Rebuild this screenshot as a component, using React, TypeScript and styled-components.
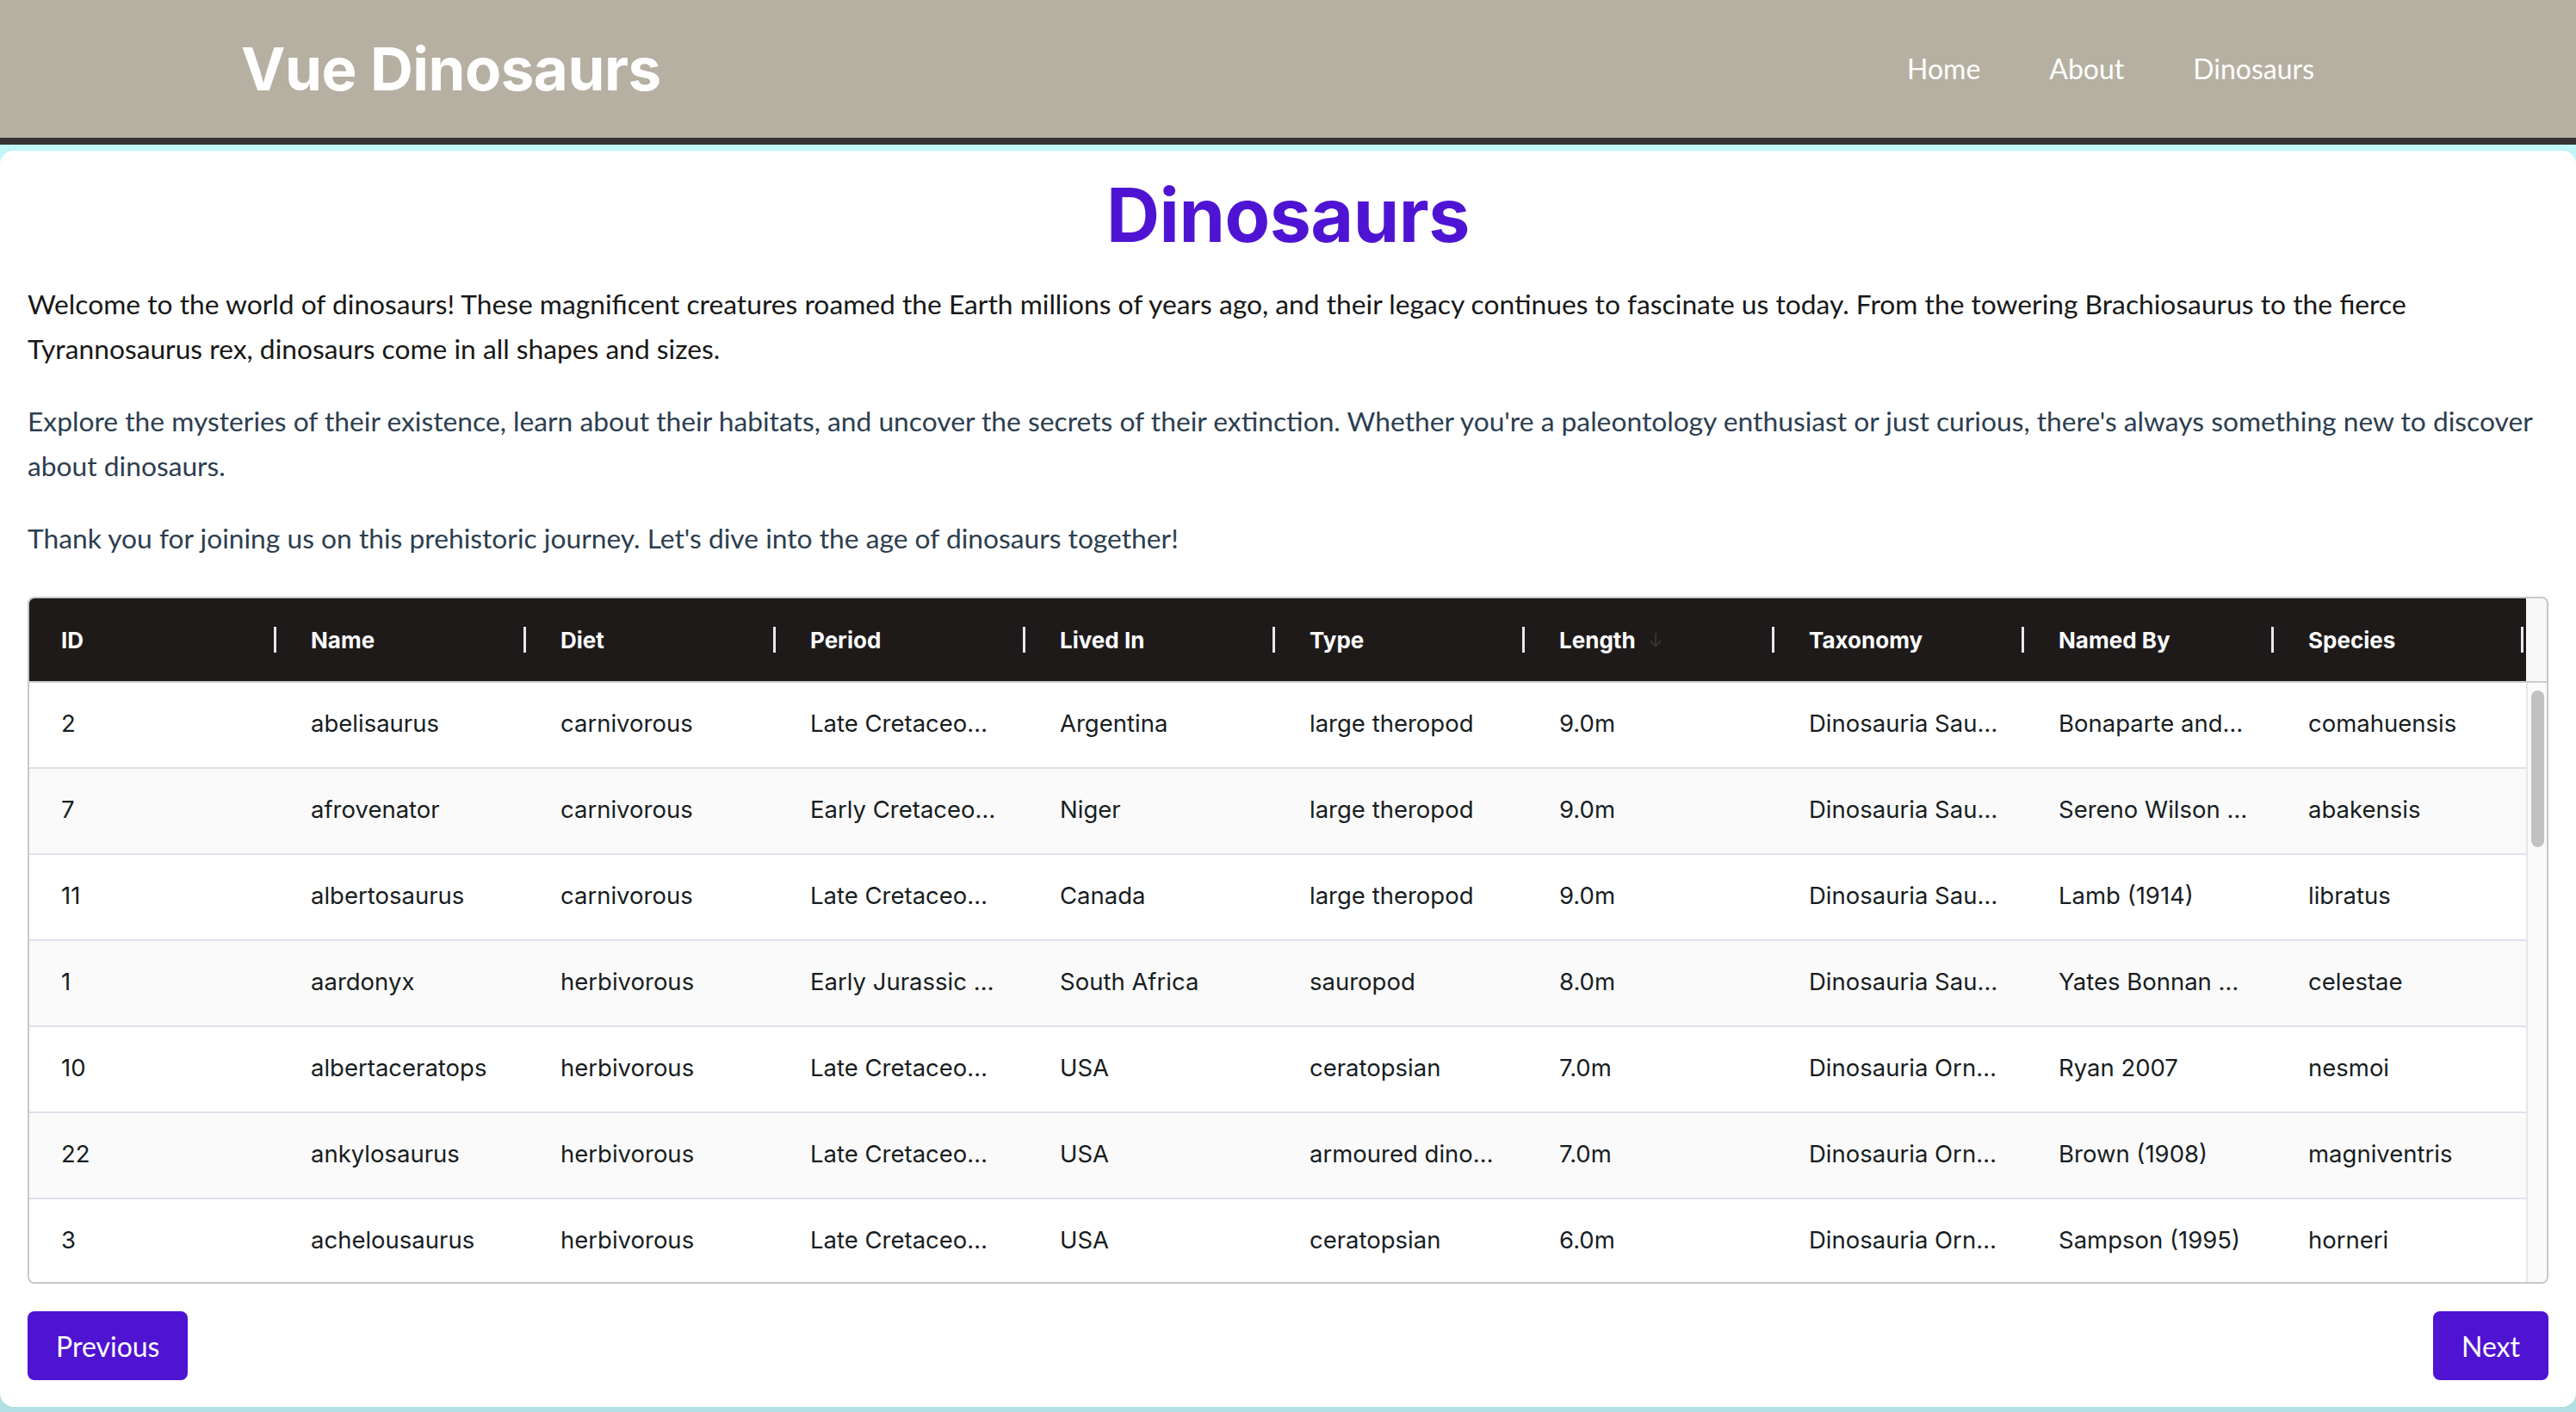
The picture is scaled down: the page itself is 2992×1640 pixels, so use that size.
import React from "react";
import styled, { createGlobalStyle } from "styled-components";

const GlobalStyle = createGlobalStyle`
  html, body {
    margin: 0;
    padding: 0;
  }
  body {
    min-height: 100vh;
    background: linear-gradient(180deg, #c3f9fc 0%, #b2e0e4 100%);
    font-family: "Lato", "Open Sans", sans-serif;
  }
  * { box-sizing: border-box; }
`;

const Header = styled.header`
  height: 168px;
  background: #b6b0a3;
  border-bottom: 8px solid #333333;
  display: flex;
  align-items: center;
  justify-content: space-between;
  padding: 0 304px 0 280px;
`;

const Brand = styled.div`
  font-family: "Inter", "DejaVu Sans", sans-serif;
  font-weight: 700;
  font-size: 69px;
  letter-spacing: -0.5px;
  color: #ffffff;
  line-height: 1;
`;

const Nav = styled.nav`
  display: flex;
  gap: 80px;
`;

const NavLink = styled.a`
  font-family: "Lato", sans-serif;
  font-size: 32px;
  color: #ffffff;
  text-decoration: none;
  line-height: 1;
`;

const Page = styled.main`
  padding: 7px 0;
`;

const Card = styled.section`
  background: #ffffff;
  border-radius: 16px;
  padding: 24px 32px 31px;
  display: flex;
  flex-direction: column;
`;

const Title = styled.h1`
  margin: 0 0 25px;
  text-align: center;
  font-family: "Inter", "DejaVu Sans", sans-serif;
  font-weight: 700;
  font-size: 86px;
  line-height: 103px;
  letter-spacing: -0.5px;
  color: #4f14d3;
`;

const Intro = styled.div`
  display: flex;
  flex-direction: column;
  gap: 32px;
  margin-bottom: 42px;
`;

const Paragraph = styled.p<{ $tone?: "dark" | "slate" }>`
  margin: 0;
  font-family: "Lato", sans-serif;
  font-size: 31.75px;
  line-height: 52px;
  color: ${(p) => (p.$tone === "slate" ? "#2c3e50" : "#181818")};
`;

const Grid = styled.div`
  border: 2px solid #c4c8cc;
  border-radius: 8px;
  overflow: hidden;
  height: 798px;
  display: flex;
  flex-direction: column;
  font-family: "Inter", "Roboto", sans-serif;
`;

const HeaderRow = styled.div`
  display: flex;
  height: 98px;
  flex: none;
  border-bottom: 2px solid #c9ccd1;
`;

const HeaderCells = styled.div`
  display: flex;
  background: #1e1a1a;
`;

const HeaderCell = styled.div`
  position: relative;
  width: 290px;
  flex: none;
  padding: 0 37px;
  display: flex;
  align-items: center;
  gap: 12px;
  font-size: 26px;
  font-weight: 700;
  color: #ffffff;

  &::after {
    content: "";
    position: absolute;
    right: 3px;
    top: 50%;
    width: 3px;
    height: 30px;
    margin-top: -15px;
    background: #e6e8ec;
  }
`;

const SortIcon = styled.svg`
  width: 22px;
  height: 22px;
  flex: none;
`;

const HeaderGutter = styled.div`
  flex: 1;
  background: #f8f8f8;
`;

const Body = styled.div`
  flex: 1;
  display: flex;
  min-height: 0;
`;

const Rows = styled.div`
  display: flex;
  flex-direction: column;
  overflow: hidden;
`;

const Row = styled.div<{ $alt: boolean }>`
  display: flex;
  flex: none;
  height: 100px;
  border-bottom: 2px solid #dde2eb;
  background: ${(p) => (p.$alt ? "#fafafa" : "#ffffff")};
`;

const Cell = styled.div`
  width: 290px;
  flex: none;
  padding: 0 37px 5px;
  display: flex;
  align-items: center;
  font-size: 27.5px;
  color: #181d1f;
  white-space: nowrap;
  overflow: hidden;
  text-overflow: ellipsis;
`;

const ScrollTrack = styled.div`
  flex: 1;
  background: #fafafa;
  border-left: 2px solid #e6e6e6;
  padding: 9px 0 0 4px;
`;

const ScrollThumb = styled.div`
  width: 15px;
  height: 182px;
  border-radius: 8px;
  background: #c1c1c1;
`;

const Pager = styled.div`
  display: flex;
  justify-content: space-between;
  margin-top: 32px;
`;

const PagerButton = styled.button`
  height: 80px;
  padding: 0 33px;
  border: none;
  border-radius: 8px;
  background: #4f13d2;
  color: #ffffff;
  font-family: "Lato", sans-serif;
  font-size: 32px;
  cursor: pointer;
`;

const columns = [
  "ID",
  "Name",
  "Diet",
  "Period",
  "Lived In",
  "Type",
  "Length",
  "Taxonomy",
  "Named By",
  "Species",
];

const rows: string[][] = [
  ["2", "abelisaurus", "carnivorous", "Late Cretaceo…", "Argentina", "large theropod", "9.0m", "Dinosauria Sau…", "Bonaparte and…", "comahuensis"],
  ["7", "afrovenator", "carnivorous", "Early Cretaceo…", "Niger", "large theropod", "9.0m", "Dinosauria Sau…", "Sereno Wilson …", "abakensis"],
  ["11", "albertosaurus", "carnivorous", "Late Cretaceo…", "Canada", "large theropod", "9.0m", "Dinosauria Sau…", "Lamb (1914)", "libratus"],
  ["1", "aardonyx", "herbivorous", "Early Jurassic …", "South Africa", "sauropod", "8.0m", "Dinosauria Sau…", "Yates Bonnan …", "celestae"],
  ["10", "albertaceratops", "herbivorous", "Late Cretaceo…", "USA", "ceratopsian", "7.0m", "Dinosauria Orn…", "Ryan 2007", "nesmoi"],
  ["22", "ankylosaurus", "herbivorous", "Late Cretaceo…", "USA", "armoured dino…", "7.0m", "Dinosauria Orn…", "Brown (1908)", "magniventris"],
  ["3", "achelousaurus", "herbivorous", "Late Cretaceo…", "USA", "ceratopsian", "6.0m", "Dinosauria Orn…", "Sampson (1995)", "horneri"],
];

export default function App() {
  return (
    <>
      <GlobalStyle />
      <Header>
        <Brand>Vue Dinosaurs</Brand>
        <Nav>
          <NavLink href="#">Home</NavLink>
          <NavLink href="#">About</NavLink>
          <NavLink href="#">Dinosaurs</NavLink>
        </Nav>
      </Header>
      <Page>
        <Card>
          <Title>Dinosaurs</Title>
          <Intro>
            <Paragraph $tone="dark">
              Welcome to the world of dinosaurs! These magnificent creatures roamed the Earth millions of years ago, and
              their legacy continues to fascinate us today. From the towering Brachiosaurus to the fierce Tyrannosaurus
              rex, dinosaurs come in all shapes and sizes.
            </Paragraph>
            <Paragraph $tone="slate">
              Explore the mysteries of their existence, learn about their habitats, and uncover the secrets of their
              extinction. Whether you're a paleontology enthusiast or just curious, there's always something new to
              discover about dinosaurs.
            </Paragraph>
            <Paragraph $tone="slate">
              Thank you for joining us on this prehistoric journey. Let's dive into the age of dinosaurs together!
            </Paragraph>
          </Intro>
          <Grid>
            <HeaderRow>
              <HeaderCells>
                {columns.map((c) => (
                  <HeaderCell key={c}>
                    {c}
                    {c === "Length" && (
                      <SortIcon viewBox="0 0 24 24" fill="none" stroke="#3a3636" strokeWidth="2" strokeLinecap="round">
                        <path d="M12 4v16M6 14l6 6 6-6" />
                      </SortIcon>
                    )}
                  </HeaderCell>
                ))}
              </HeaderCells>
              <HeaderGutter />
            </HeaderRow>
            <Body>
              <Rows>
                {rows.map((r, i) => (
                  <Row key={i} $alt={i % 2 === 1}>
                    {r.map((v, j) => (
                      <Cell key={j}>{v}</Cell>
                    ))}
                  </Row>
                ))}
              </Rows>
              <ScrollTrack>
                <ScrollThumb />
              </ScrollTrack>
            </Body>
          </Grid>
          <Pager>
            <PagerButton>Previous</PagerButton>
            <PagerButton>Next</PagerButton>
          </Pager>
        </Card>
      </Page>
    </>
  );
}
